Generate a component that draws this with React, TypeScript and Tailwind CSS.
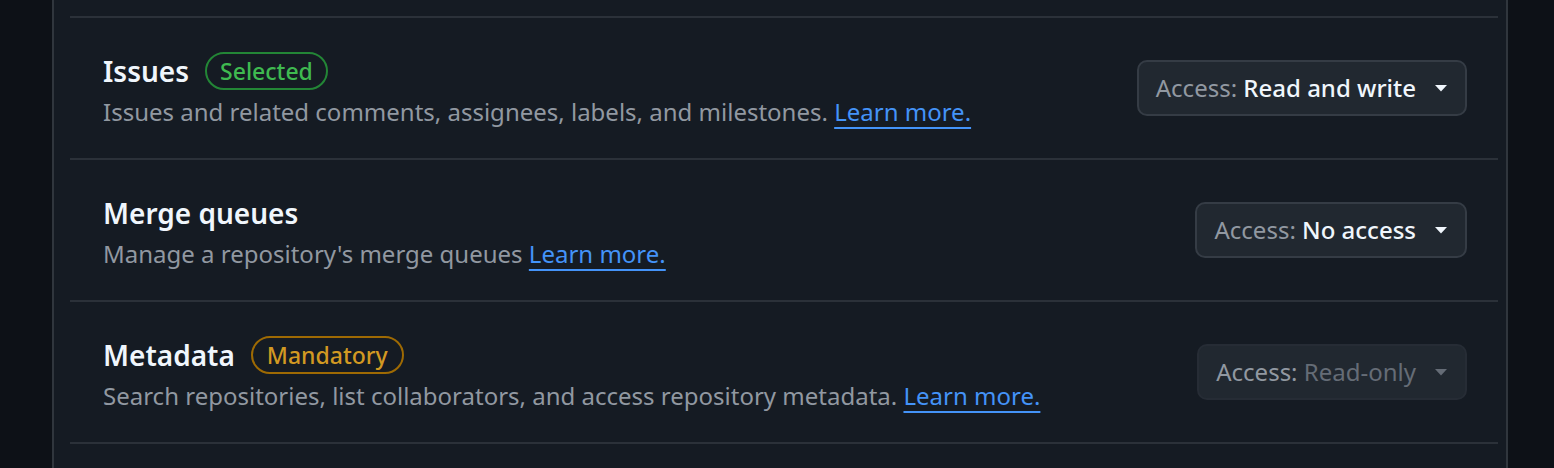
import React from "react";

type Perm = {
  title: string;
  badge?: { label: string; tone: "green" | "yellow" };
  desc: string;
  access: string;
  disabled?: boolean;
};

const perms: Perm[] = [
  {
    title: "Issues",
    badge: { label: "Selected", tone: "green" },
    desc: "Issues and related comments, assignees, labels, and milestones.",
    access: "Read and write",
  },
  {
    title: "Merge queues",
    desc: "Manage a repository's merge queues",
    access: "No access",
  },
  {
    title: "Metadata",
    badge: { label: "Mandatory", tone: "yellow" },
    desc: "Search repositories, list collaborators, and access repository metadata.",
    access: "Read-only",
    disabled: true,
  },
];

const Caret = ({ dim }: { dim?: boolean }) => (
  <svg
    width="14"
    height="8"
    viewBox="0 0 14 8"
    className={dim ? "fill-[#656c76]" : "fill-[#f0f6fc]"}
  >
    <path d="M1 1h12L7 7.5z" />
  </svg>
);

const Badge = ({ label, tone }: { label: string; tone: "green" | "yellow" }) => (
  <span
    className={
      tone === "green"
        ? "flex h-[38px] items-center rounded-full border-2 border-[#238636] px-[13px] text-[23px] font-medium text-[#3fb950]"
        : "flex h-[38px] items-center rounded-full border-2 border-[#9e6a03] px-[14px] text-[23px] font-medium text-[#d29922]"
    }
  >
    {label}
  </span>
);

const Row = ({ p }: { p: Perm }) => (
  <div className="flex h-[142px] items-center justify-between border-b-2 border-[#2b3139] pl-[33px] pr-[31px]">
    <div className="flex flex-col pt-[6px]">
      <div className="flex h-[38px] items-center gap-[16px]">
        <span className="text-[28px] font-semibold text-[#f0f6fc]">{p.title}</span>
        {p.badge && <Badge label={p.badge.label} tone={p.badge.tone} />}
      </div>
      <p className="mt-[4px] text-[24px] leading-[36px] text-[#9198a1]">
        {p.desc}{" "}
        <a className="text-[#4493f8] underline decoration-[2px] underline-offset-[6px]">
          Learn more.
        </a>
      </p>
    </div>
    <button
      className={
        p.disabled
          ? "flex h-[56px] items-center gap-[18px] rounded-[10px] border-2 border-[#262c35] bg-[#212830] pl-[17px] pr-[17px] text-[24px]"
          : "flex h-[56px] items-center gap-[18px] rounded-[10px] border-2 border-[#353c45] bg-[#212830] pl-[17px] pr-[17px] text-[24px]"
      }
    >
      <span>
        <span className="text-[#9198a1]">Access: </span>
        <span className={p.disabled ? "text-[#656c76]" : "font-medium text-[#f0f6fc]"}>
          {p.access}
        </span>
      </span>
      <Caret dim={p.disabled} />
    </button>
  </div>
);

export default function App() {
  return (
    <div
      className="flex h-[468px] w-full bg-[#0d1117] pl-[52px] pr-[46px]"
      style={{ fontFamily: '"Noto Sans", "Open Sans", sans-serif' }}
    >
      <div className="h-full flex-1 border-x-2 border-[#30363d] bg-[#151b23] pl-[16px] pr-[8px] pt-[16px]">
        <div className="border-t-2 border-[#2b3139]">
          {perms.map((p) => (
            <Row key={p.title} p={p} />
          ))}
        </div>
      </div>
    </div>
  );
}
